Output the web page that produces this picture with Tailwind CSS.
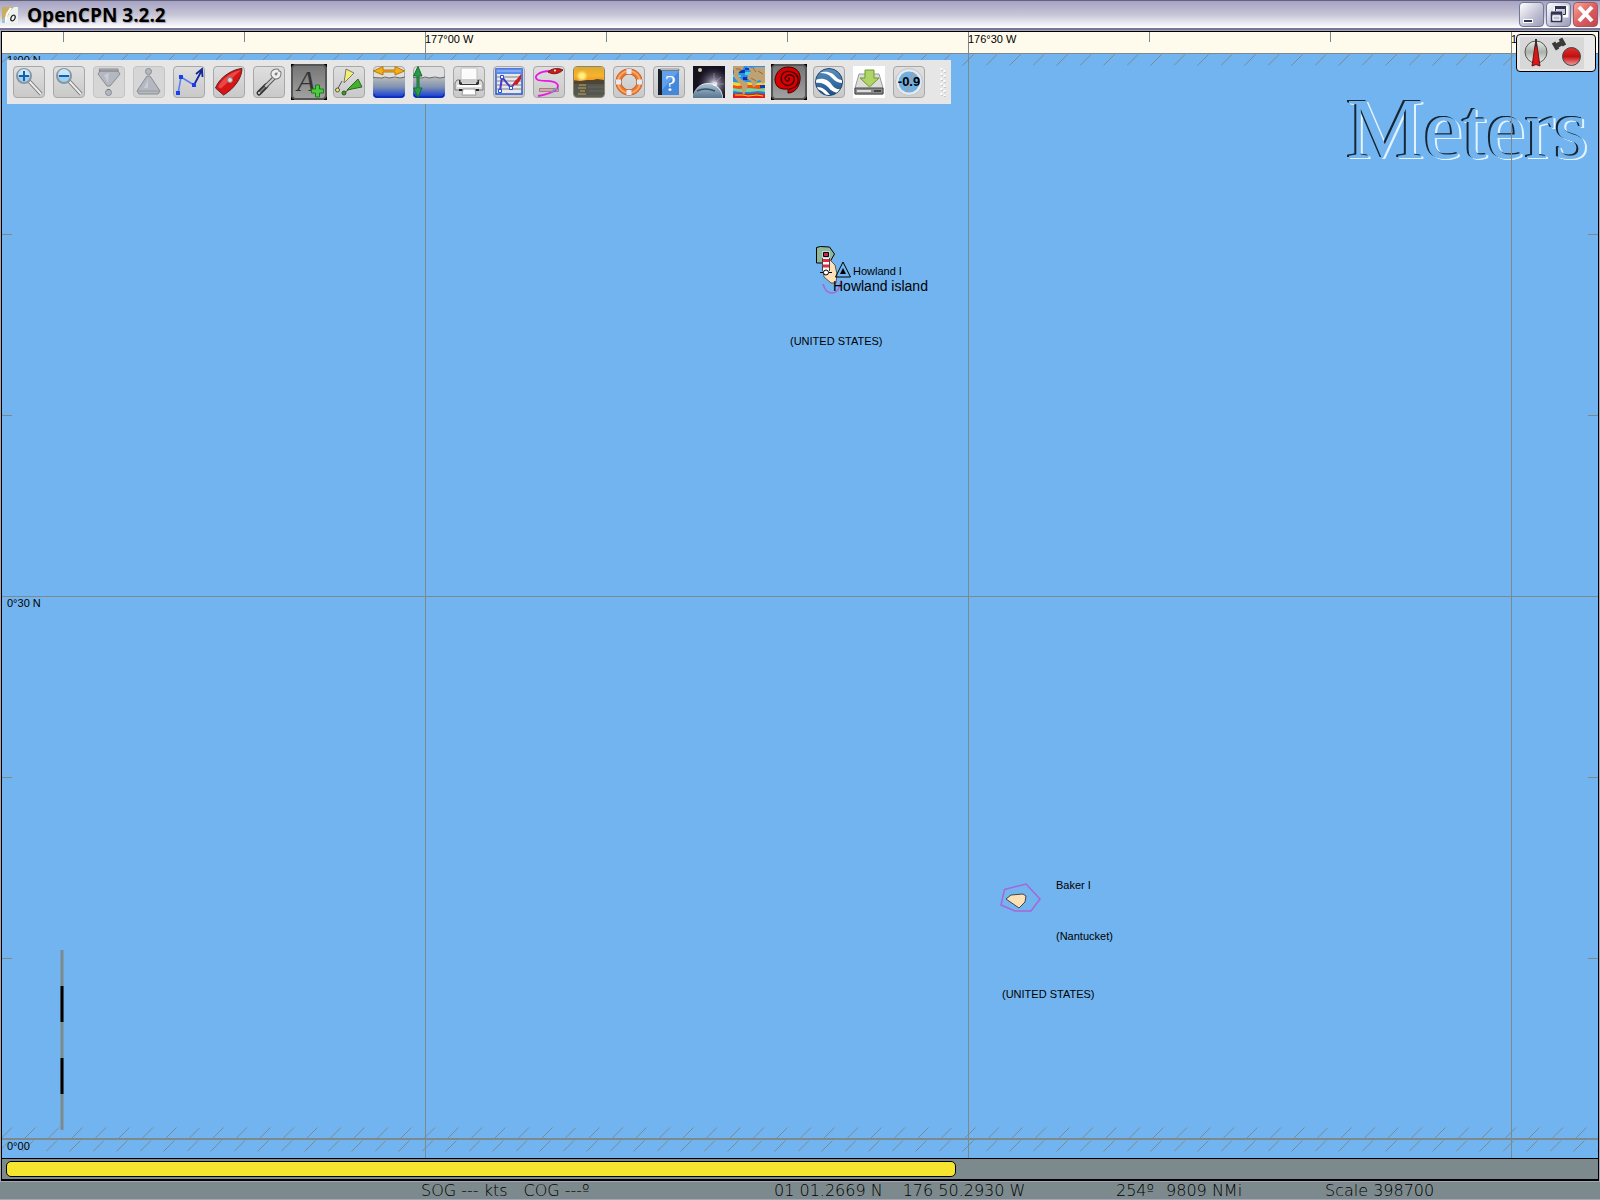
<!DOCTYPE html>
<html lang="en">
<head>
    <meta charset="UTF-8">
    <meta name="viewport" content="width=device-width, initial-scale=1">
    <title>OpenCPN 3.2.2</title>
    <script src="https://cdn.jsdelivr.net/npm/@tailwindcss/browser@4"></script>
</head>
<body class="min-h-screen flex flex-col overflow-hidden bg-[#a5a5b8] font-['Liberation_Sans',Arial,sans-serif] text-black">

    <!-- Title bar -->
    <header class="h-[30px] shrink-0 flex items-center pl-[2px] pr-[2px] border-t border-b-2 border-t-[#62627a] border-b-[#77779a] bg-linear-to-b from-[#a5a3c3] via-[#c6c5d6] to-white">
        <svg class="size-4" viewBox="0 0 16 16" aria-hidden="true">
            <rect width="16" height="16" fill="#eef3f0"/>
            <path d="M0 0h12L8 4 6 9 3 12 0 14z" fill="#c9ae62"/>
            <path d="M9 1 5 7 3 16" stroke="#fff" stroke-width="2" fill="none"/>
            <path d="M0 13 3 10v6H0z" fill="#9cc5d8"/>
            <ellipse cx="11" cy="11" rx="2" ry="3" transform="rotate(25 11 11)" fill="none" stroke="#222" stroke-width="1.2"/>
        </svg>
        <h1 class="ml-[9px] text-[19px] leading-6 font-bold font-['Open_Sans','Noto_Sans',sans-serif] [text-shadow:1px_1px_1px_#a0a0ac]">OpenCPN 3.2.2</h1>
        <div class="ml-auto flex gap-[2px]">
            <button type="button" aria-label="Minimize" class="size-[25px] rounded border border-[#6f7897] bg-linear-to-br from-white via-[#c9c9da] to-[#9c9cb8]">
                <svg viewBox="0 0 23 23" class="size-full"><rect x="3.500" y="16.500" width="9" height="3" fill="#313550" stroke="#fff"/></svg>
            </button>
            <button type="button" aria-label="Restore" class="size-[25px] rounded border border-[#6f7897] bg-linear-to-br from-white via-[#c9c9da] to-[#9c9cb8]">
                <svg viewBox="0 0 23 23" class="size-full" fill="none">
                    <path d="M8 4h12v9h-4M8 4v4" stroke="#fff" stroke-width="3"/>
                    <path d="M8.500 8V4.500h10v7H16" stroke="#313550"/><path d="M8 4.500h11" stroke="#313550" stroke-width="3"/>
                    <path d="M4.500 10.500h10v8h-10z" fill="#c2c2d8" stroke="#313550" stroke-width="1.500"/><path d="M4 10h11" stroke="#313550" stroke-width="3"/>
                    <path d="M6 13h7v4H6z" stroke="#fff"/>
                </svg>
            </button>
            <button type="button" aria-label="Close" class="size-[25px] rounded border border-[#a85563] bg-linear-to-br from-[#f4a99c] via-[#dc5f60] to-[#c04450]">
                <svg viewBox="0 0 23 23" class="size-full"><path d="M5 4 18 18M18 4 5 18" stroke="#fff" stroke-width="4"/></svg>
            </button>
        </div>
    </header>

    <!-- Chart window -->
    <div class="flex-1 flex flex-col mx-px mt-px border border-b-2 border-black">
        <main class="relative flex-1 overflow-hidden bg-[#72b4ef] text-[11px] leading-3">
            <div class="h-[22px] bg-[#fffbec] border-b border-[#7d8a8d]"></div>

            <div class="absolute right-[10px] top-[49px] text-[87px] leading-[96px] font-['Liberation_Serif','Times_New_Roman',serif] text-[#72b4ef] [text-shadow:-1px_-1px_0_#172635,-2px_-1px_0_#172635,1px_1px_0_#e2f2ff,2px_1px_0_#e2f2ff]">Meters</div>

            <!-- Graticule and chart objects -->
            <svg class="absolute inset-0 size-full" aria-hidden="true">
                <defs>
                    <pattern id="hatchDown" x="0" y="0" width="47" height="12" patternUnits="userSpaceOnUse">
                        <path d="M0 11.500 11 .5M23.500 11.500l11-11" stroke="#7d8a8d"/>
                    </pattern>
                </defs>
                <g transform="translate(-2 -32)" fill="none">
                    <g transform="translate(-1 54)"><rect width="4000" height="12" fill="url(#hatchDown)"/></g>
                    <g transform="translate(1 1127)"><rect width="4000" height="12" fill="url(#hatchDown)"/></g>
                    <g transform="translate(-1 1140)"><rect width="4000" height="12" fill="url(#hatchDown)"/></g>

                    <g stroke="#7d8a8d" shape-rendering="crispEdges">
                        <path d="M425.500 32V1300M968.500 32V1300M1511.500 32V1300M0 596.500H4000"/>
                        <path d="M0 1139H4000" stroke-width="2"/>
                        <path d="M63.500 32v10M244.500 32v10M606.500 32v10M787.500 32v10M1149.500 32v10M1330.500 32v10"/>
                        <path d="M2 234.500h10M2 415.500h10M2 777.500h10M2 958.500h10M1588 234.500h10M1588 415.500h10M1588 777.500h10M1588 958.500h10"/>
                    </g>
                    <path d="M62 950V1130" stroke="#7d8a8d" stroke-width="3"/>
                    <path d="M62 986v36M62 1058v36" stroke="#000" stroke-width="3"/>

                    <!-- Howland -->
                    <path d="M823 284c2 6 4 9 9 9s8-5 9-13" stroke="#a866d4" stroke-width="1.500"/>
                    <path d="M816.500 247.500l4-1 9 .5 5 7-4 7-5 2h-9z" fill="#8cb89c" stroke="#000"/>
                    <path d="M830 260l5 5 2 9-1 9h-5l-7-6-1-8z" fill="#fce0b8" stroke="#555"/>
                    <path d="M822 251h8v20h-8z" fill="#c5d4dc"/>
                    <path d="M823.500 252.500h5v4h-5z" fill="#c22b45" stroke="#000"/>
                    <path d="M823 258h6v13h-6z" fill="#fff"/><path d="M823 260.500h6M823 266h6" stroke="#e8283c" stroke-width="3"/>
                    <path d="M822.500 258v13M829.500 258v13" stroke="#444"/>
                    <circle cx="826" cy="272.500" r="2.500" fill="#fff" stroke="#000"/><path d="M820 272.500h3M829 272.500h3" stroke="#000"/>
                    <path d="M843 262l7.500 15h-15z" stroke="#000"/><path d="M843 268l3 6h-6z" fill="#000"/>
                    <!-- Baker -->
                    <path d="M1004.500 889.500l21.500-5.500 14 15-9 12h-16l-14-6z" stroke="#a866d4" stroke-width="1.500"/>
                    <path d="M1006 899l5-4 12-1 3 2-1 6-6 6z" fill="#fce0b8" stroke="#444"/>
                </g>
            </svg>

            <span class="absolute left-[423px] top-px">177°00 W</span>
            <span class="absolute left-[966px] top-px">176°30 W</span>
            <span class="absolute left-[1509px] top-px whitespace-nowrap">176°00 W</span>
            <span class="absolute left-[5px] top-[22px]">1°00 N</span>
            <span class="absolute left-[5px] top-[565px]">0°30 N</span>
            <span class="absolute left-[5px] top-[1108px]">0°00</span>

            <span class="absolute left-[851px] top-[233px]">Howland I</span>
            <span class="absolute left-[831px] top-[246px] text-sm leading-4">Howland island</span>
            <span class="absolute left-[788px] top-[303px]">(UNITED STATES)</span>
            <span class="absolute left-[1054px] top-[847px]">Baker I</span>
            <span class="absolute left-[1054px] top-[898px]">(Nantucket)</span>
            <span class="absolute left-[1000px] top-[956px]">(UNITED STATES)</span>

            <!-- Toolbar -->
            <div role="toolbar" aria-label="Chart tools" class="absolute left-[5px] top-7 h-11 flex items-center gap-2 pl-[6px] pr-1 bg-[#e6e6e6]">
                <button type="button" aria-label="Zoom in" class="size-8 rounded border border-[#a8a8a8] bg-linear-to-b from-[#dfdfdf] to-[#c9c9c9]">
                    <svg viewBox="1 1 30 30" class="size-full" fill="none">
                        <path d="M16 15 28 28" stroke="#777" stroke-width="4"/><path d="M16 15 28 28" stroke="#eee" stroke-width="2"/>
                        <circle cx="11" cy="10" r="7" fill="#9ad2f5" stroke="#8a959c" stroke-width="2"/><path d="M5 9a6 6 0 0 1 12 0z" fill="#c4e7fb"/>
                        <path d="M6 10h10M11 5v10" stroke="#1c5fa8" stroke-width="2"/>
                    </svg>
                </button>
                <button type="button" aria-label="Zoom out" class="size-8 rounded border border-[#a8a8a8] bg-linear-to-b from-[#dfdfdf] to-[#c9c9c9]">
                    <svg viewBox="1 1 30 30" class="size-full" fill="none">
                        <path d="M16 15 28 28" stroke="#777" stroke-width="4"/><path d="M16 15 28 28" stroke="#eee" stroke-width="2"/>
                        <circle cx="11" cy="10" r="7" fill="#9ad2f5" stroke="#8a959c" stroke-width="2"/><path d="M5 9a6 6 0 0 1 12 0z" fill="#c4e7fb"/>
                        <path d="M6 10h10" stroke="#1c5fa8" stroke-width="2"/>
                    </svg>
                </button>
                <button type="button" aria-label="Larger scale chart" class="size-8 rounded border border-[#c4c4c4] bg-[#d6d6d6]">
                    <svg viewBox="1 1 30 30" class="size-full" fill="#b4b8c0" stroke="#888c92">
                        <path d="M6 3h19v2l2 3-10 12h-3L5 8l2-3z"/><path d="M6 5h19" stroke="#777"/><path d="M16 7 11 9l4 8z" fill="#c8ccd4" stroke="none"/><circle cx="15.500" cy="26.500" r="3"/><path d="M14 23.500h3" stroke="#777"/>
                    </svg>
                </button>
                <button type="button" aria-label="Smaller scale chart" class="size-8 rounded border border-[#c4c4c4] bg-[#d6d6d6]">
                    <svg viewBox="1 1 30 30" class="size-full" fill="#b4b8c0" stroke="#888c92">
                        <circle cx="15.500" cy="5.500" r="3"/><path d="M14 10h3l8 12 2 3-2 3H6l-2-3 2-3z"/><path d="M5 25h21" stroke="#999"/><path d="M15 13 11 22h4z" fill="#c8ccd4" stroke="none"/>
                    </svg>
                </button>
                <button type="button" aria-label="Create route" class="size-8 rounded border border-[#a8a8a8] bg-linear-to-b from-[#dfdfdf] to-[#c9c9c9]">
                    <svg viewBox="1 1 30 30" class="size-full" fill="none">
                        <path d="M5 28 8 11l13 8" stroke="#5a7bf0" stroke-width="1.500"/><path d="M21 19 29 4M23 8l6-5 .5 8" stroke="#14289a" stroke-width="1.800"/>
                        <path d="M3 25h4v4H3zM6 9h4v4H6zM19 17h4v4h-4z" fill="#1740f0"/>
                    </svg>
                </button>
                <button type="button" aria-label="Follow ship" class="size-8 rounded border border-[#a8a8a8] bg-linear-to-b from-[#dfdfdf] to-[#c9c9c9]">
                    <svg viewBox="1 1 30 30" class="size-full">
                        <path d="M29 2.500C21 3 7 10 2.500 22l8 7C21 23 29 12 29 2.500z" fill="#d81414" stroke="#5c2020"/><path d="M28 4C20 5 9 12 5 21l3 1.500z" fill="#e84848"/><circle cx="17" cy="14" r="2.500" fill="#ddd" stroke="#888"/>
                    </svg>
                </button>
                <button type="button" aria-label="Settings" class="size-8 rounded border border-[#a8a8a8] bg-linear-to-b from-[#dfdfdf] to-[#c9c9c9]">
                    <svg viewBox="1 1 30 30" class="size-full" fill="none" stroke-linecap="round">
                        <path d="M6 27 13 20" stroke="#333" stroke-width="5"/><path d="M6 27 13 20" stroke="#888" stroke-width="1.500"/>
                        <path d="M13 20 22 11" stroke="#555" stroke-width="4"/><path d="M13 20 22 11" stroke="#ccc" stroke-width="2"/>
                        <path d="M24 5c-4 0-5 3-3 5 2 2 5 1 5-3" stroke="#777" stroke-width="5"/><path d="M24 5c-4 0-5 3-3 5 2 2 5 1 5-3" stroke="#f0f0f0" stroke-width="3"/><circle cx="6" cy="27" r="1" fill="#ddd"/>
                    </svg>
                </button>
                <button type="button" aria-label="Show ENC text" aria-pressed="true" class="size-9 -mx-[2px] bg-black">
                    <svg viewBox="0 0 36 36" class="size-full">
                        <defs><linearGradient id="pressed" x2="0" y2="1"><stop stop-color="#757575"/><stop offset="1" stop-color="#a2a2a2"/></linearGradient></defs>
                        <path d="M4 0h28l4 4v28l-4 4H4l-4-4V4z" fill="#8a8a8a"/><rect x="1" y="1" width="34" height="34" rx="4" fill="url(#pressed)" stroke="#555" stroke-width="2"/>
                        <text x="6" y="27" font-family="Liberation Serif, serif" font-style="italic" font-size="30" fill="#333">A</text>
                        <path d="M24.500 21h4v4h4v4h-4v4h-4v-4h-4v-4h4z" fill="#4ecb3a" stroke="#14801a"/>
                    </svg>
                </button>
                <button type="button" aria-label="Show AIS targets" class="size-8 rounded border border-[#a8a8a8] bg-linear-to-b from-[#dfdfdf] to-[#c9c9c9]">
                    <svg viewBox="1 1 30 30" class="size-full">
                        <path d="M4 24 9 15" stroke="#555"/><path d="M13 3l8 4-10 10z" fill="#f4ee70" stroke="#777"/><circle cx="4.500" cy="24" r="2" fill="#f0e860" stroke="#555"/>
                        <path d="M11 27 19 21" stroke="#444"/><path d="M25 13l4 8-15 3z" fill="#44b030" stroke="#2c6a22"/><circle cx="11" cy="27" r="2" fill="#3a9a2a" stroke="#245a1c"/>
                    </svg>
                </button>
                <button type="button" aria-label="Show currents" class="size-8 rounded border border-[#a8a8a8] bg-[#dfdfdf]">
                    <svg viewBox="0 0 32 32" class="size-8 -m-px">
                        <defs><linearGradient id="sea" x2="0" y2="1"><stop stop-color="#b4b8ba"/><stop offset=".45" stop-color="#7f92b0"/><stop offset="1" stop-color="#0834dc"/></linearGradient></defs>
                        <path d="M0 12h32v16q0 4-4 4H4q-4 0-4-4z" fill="url(#sea)"/><path d="M1 28q0 3 3 3h24q3 0 3-3" fill="none" stroke="#0a20a8"/>
                        <path d="M0 11.500l9 .5 3-1 4 1 6-1 5 1 5-1" fill="none" stroke="#666"/>
                        <path d="M.5 5 10 .5V4h12V.5L31.500 5 22 9V6H10v3z" fill="#f6ae18" stroke="#b87a08"/>
                    </svg>
                </button>
                <button type="button" aria-label="Show tides" class="size-8 rounded border border-[#a8a8a8] bg-[#dfdfdf]">
                    <svg viewBox="0 0 32 32" class="size-8 -m-px">
                        <path d="M0 12h32v16q0 4-4 4H4q-4 0-4-4z" fill="url(#sea)"/><path d="M1 28q0 3 3 3h24q3 0 3-3" fill="none" stroke="#0a20a8"/>
                        <path d="M0 11.500l9 .5 3-1 4 1 6-1 5 1 5-1" fill="none" stroke="#666"/>
                        <path d="M5 .5 9 10H6v12h3L5 31.500 .5 22H4V10H.5z" fill="#2a9a48" stroke="#157030"/>
                    </svg>
                </button>
                <button type="button" aria-label="Print chart" class="size-8 rounded border border-[#a8a8a8] bg-linear-to-b from-[#dfdfdf] to-[#c9c9c9]">
                    <svg viewBox="1 1 30 30" class="size-full">
                        <path d="M4 14h24l2 3v7H2v-7z" fill="#dcdcdc" stroke="#777"/><path d="M6 14h3v4h14v-4h3v4l-3 2H9l-3-2z" fill="#333"/><path d="M8 2h16v14H8z" fill="#fbfbfb" stroke="#c0c0c0"/><path d="M8 13h16v3H8z" fill="#ccc"/>
                        <path d="M4 20h24" stroke="#fff" stroke-width="2"/><path d="M6 23h20v2H6z" fill="#222"/><path d="M10 23h12l1 6H9z" fill="#fff" stroke="#999"/>
                    </svg>
                </button>
                <button type="button" aria-label="Route manager" class="size-8 rounded border border-[#a8a8a8] bg-linear-to-b from-[#dfdfdf] to-[#c9c9c9]">
                    <svg viewBox="1 1 30 30" class="size-full" fill="none">
                        <path d="M3 3h26v25H3z" fill="#e8e8e8" stroke="#2858d0" stroke-width="1.500"/><path d="M3 3h26v5H3z" fill="#5a8cec"/><path d="M4 5h24" stroke="#a8c4f8"/>
                        <path d="M4 11h24M4 15h24M4 19h24M4 23h24" stroke="#b4b4b4" stroke-width="2"/>
                        <path d="M7 25 9 11l9 11" stroke="#4838d0" stroke-width="2"/><path d="M18 22 24 14" stroke="#a02080" stroke-width="2"/><path d="M28 8v5l-4 6-4-1z" fill="#c82020"/>
                        <path d="M5.500 23.500h3v3h-3zM7.500 9.500h3v3h-3zM16.500 20.500h3v3h-3z" fill="#fff" stroke="#2050e0"/>
                    </svg>
                </button>
                <button type="button" aria-label="Start tracking" class="size-8 rounded border border-[#a8a8a8] bg-linear-to-b from-[#dfdfdf] to-[#c9c9c9]">
                    <svg viewBox="1 1 30 30" class="size-full" fill="none">
                        <path d="M6.500 22.500h19v3h-19z" fill="#d6a8a4" stroke="#a08080"/><path d="M17 5C6 5-1 11 5 14c5 2 19-1 20 6 0 5-9 8-20 10" stroke="#e818e0" stroke-width="1.800"/>
                        <path d="M30 4C24 1 18 3 15 6c5 3 11 2 15-2z" fill="#d01818" stroke="#702020"/><circle cx="22" cy="4.500" r="1" fill="#fff"/><path d="m18 26 6-4" stroke="#7aa0c0" stroke-width="2"/>
                    </svg>
                </button>
                <button type="button" aria-label="Change color scheme" class="size-8 rounded overflow-hidden border border-[#8c8468]">
                    <svg viewBox="1 1 30 30" class="size-full">
                        <defs>
                            <linearGradient id="dusk" x2="0" y2="1"><stop stop-color="#d8a838"/><stop offset=".6" stop-color="#f8b428"/><stop offset="1" stop-color="#e89030"/></linearGradient>
                            <radialGradient id="sun"><stop offset=".4" stop-color="#ffee80"/><stop offset="1" stop-color="#ffe060" stop-opacity="0"/></radialGradient>
                        </defs>
                        <path d="M0 0h32v16H0z" fill="url(#dusk)"/><circle cx="9" cy="10" r="6" fill="url(#sun)"/>
                        <path d="M0 14l7 1 7-1 6 0 4-1 8 1v5H0z" fill="#504434"/><path d="M0 18h32v14H0z" fill="#545650"/><path d="M6 19h7M5 22h8M7 25h5M5 28h8" stroke="#a08c50" stroke-width="1.500"/><path d="M15 21h16M16 25h15M3 30h27" stroke="#64665e"/>
                    </svg>
                </button>
                <button type="button" aria-label="Drop MOB marker" class="size-8 rounded border border-[#a8a8a8] bg-linear-to-b from-[#dfdfdf] to-[#c9c9c9]">
                    <svg viewBox="1 1 30 30" class="size-full" fill="none">
                        <circle cx="16" cy="16" r="10.500" stroke="#a8562c" stroke-width="6"/><circle cx="16" cy="16" r="10.500" stroke="#ee7828" stroke-width="5"/><circle cx="16" cy="16" r="11" stroke="#fcae74" stroke-width="1.500"/>
                        <path d="M16 3v5M16 24v5M3 16h5M24 16h5" stroke="#dfeafa" stroke-width="5"/>
                    </svg>
                </button>
                <button type="button" aria-label="Help" class="size-8 rounded border border-[#a8a8a8] bg-linear-to-b from-[#dfdfdf] to-[#c9c9c9]">
                    <svg viewBox="1 1 30 30" class="size-full">
                        <path d="M5 3h21v26H5z" fill="#4488dc"/><path d="M5 3h4v26H5z" fill="#18202c"/><path d="M7 3h19v1.500H8z" fill="#ddd" stroke="#444" stroke-width=".5"/><path d="M9 5h17L9 24z" fill="#62a0ea"/>
                        <text x="12" y="25" font-family="Liberation Serif, serif" font-size="24" fill="#fff">?</text>
                    </svg>
                </button>
                <button type="button" aria-label="Celestial navigation" class="size-8">
                    <svg viewBox="0 0 32 32" class="size-full">
                        <defs>
                            <radialGradient id="glow"><stop stop-color="#fff"/><stop offset=".3" stop-color="#b0a8c0" stop-opacity=".7"/><stop offset="1" stop-color="#443c58" stop-opacity="0"/></radialGradient>
                            <linearGradient id="planet" x2="0" y2="1"><stop stop-color="#a8c0d0"/><stop offset=".5" stop-color="#54708c"/><stop offset="1" stop-color="#182434"/></linearGradient>
                        </defs>
                        <path d="M0 0h32v32H0z" fill="#15111f"/><circle cx="21" cy="18" r="17" fill="url(#glow)"/><circle cx="7" cy="4" r="2" fill="#d8ccb0"/>
                        <circle cx="15" cy="32" r="15" fill="#e0ecf4"/><circle cx="14.500" cy="33" r="15" fill="url(#planet)"/><path d="M4 25q8-4 18 0" stroke="#34506a" stroke-width="1.500" fill="none"/>
                        <circle cx="22" cy="18" r="2" fill="#fff"/><path d="M21 7v11M21 18h10M28 11l-7 7" stroke="#b5b0c4" stroke-width=".5"/>
                    </svg>
                </button>
                <button type="button" aria-label="Climatology" class="size-8">
                    <svg viewBox="0 0 32 32" class="size-full">
                        <path d="M0 0h32v32H0z" fill="#2890e8"/><path d="M0 4h12v3H0zM10 11h18v3H10z" fill="#1030a8"/><path d="M0 9h8v2H0zM12 6h10v3H12z" fill="#40d8e0"/>
                        <path d="M0 16l8 1 6-1 9 1 9-1v4H0z" fill="#f0d830"/><path d="M0 19l4 1 8-1h20v4H0z" fill="#f05018"/><path d="M0 22l6 1 10-1 10 1 6-1v4H0z" fill="#70d8a0"/><path d="M0 25l8 1h9l8-1 7 1v3H0z" fill="#2080e0"/><path d="M0 28l6-1 9 1 9-1 8 1v4H0z" fill="#e01c18"/><path d="M2 29h8l5 1 9-1 6 1" stroke="#f8d820" fill="none"/>
                        <path d="M0 0h11l-1 3-4 3-1 4 4 4 6 3-1 5-3 7-2-3V20l-3-3-5-6zM14 0l4 2 5-1h9v15l-2 2-3-4-3 1-1 5-3 1-2-6-4-2 1-4 3-3z" fill="#c0a272"/>
                        <path d="M3 3h4l1 2M18 12l5 3M25 5l5 3M20 2l3 4" stroke="#8a7048" fill="none"/>
                        <path d="M12 2h4v2h-4zM27 19h5v3h-5z" fill="#1438c0"/>
                    </svg>
                </button>
                <button type="button" aria-label="Weather routing" aria-pressed="true" class="size-9 -mx-[2px] bg-black">
                    <svg viewBox="0 0 36 36" class="size-full">
                        <path d="M4 0h28l4 4v28l-4 4H4l-4-4V4z" fill="#8a8a8a"/><rect x="1" y="1" width="34" height="34" rx="4" fill="url(#pressed)" stroke="#555" stroke-width="2"/>
                        <path d="M17 3c9 0 13 6 12 13-1 8-6 13-12 13v-4C8 26 4 22 4 15 5 8 10 3 17 3z" fill="#d80000" stroke="#400"/>
                        <path d="M18 25c8-1 10-6 9-11-2-7-13-9-16-3-3 7 3 12 8 10s6-9 1-10-8 4-4 6c3 0 3-3 1-3" fill="none" stroke="#300" stroke-width="1.300"/>
                    </svg>
                </button>
                <button type="button" aria-label="Google Earth" class="size-8 rounded border border-[#a8a8a8] bg-linear-to-b from-[#dfdfdf] to-[#c9c9c9]">
                    <svg viewBox="1 1 30 30" class="size-full">
                        <defs>
                            <clipPath id="globe"><circle cx="16" cy="16" r="13"/></clipPath>
                            <linearGradient id="blue" x2="0" y2="1"><stop stop-color="#5a90c0"/><stop offset="1" stop-color="#1c5088"/></linearGradient>
                        </defs>
                        <circle cx="16" cy="16" r="13.500" fill="url(#blue)" stroke="#28486c"/>
                        <g clip-path="url(#globe)" fill="#fff"><path d="M6 7c8-3 14 0 17 4 3 3 5 3 7 3v3c-5 0-8-2-11-5C16 8 12 7 6 7z"/><path d="M2 14c8-3 14 0 17 5 3 4 6 5 10 4l-2 4c-5 0-9-2-12-6-3-3-7-5-13-4z"/><path d="M4 21c6 0 9 3 13 8h-4c-3-3-5-5-9-6z"/></g>
                    </svg>
                </button>
                <button type="button" aria-label="Chart downloader" class="size-8 bg-white">
                    <svg viewBox="0 0 32 32" class="size-full">
                        <path d="M6 8h20l4 14v6H2v-6z" fill="#dcdcdc" stroke="#999"/><path d="M2 22h28v6H2z" fill="#8a8a8a" stroke="#444"/><path d="M4 25h14" stroke="#ddd" stroke-width="2"/><path d="M21 25h7" stroke="#444" stroke-width="2"/>
                        <path d="M12 4h9v8h5l-9.500 9L7 12h5z" fill="#b0d468" stroke="#6a9a28"/>
                    </svg>
                </button>
                <button type="button" aria-label="Magnetic variation" class="size-8 rounded border border-[#a8a8a8] bg-linear-to-b from-[#dfdfdf] to-[#d0d0d0]">
                    <svg viewBox="1 1 30 30" class="size-full">
                        <circle cx="16" cy="16" r="13.500" fill="#e6e9ec" stroke="#c0c4c8"/><circle cx="16" cy="16" r="10.500" fill="#6cb0e4"/><path d="m20 6-6 20" stroke="#d09070"/>
                        <text x="16" y="20" text-anchor="middle" font-family="Liberation Sans, sans-serif" font-weight="bold" font-size="13">-0.9</text>
                    </svg>
                </button>
                <svg viewBox="0 0 14 32" class="h-8 w-[14px]" aria-hidden="true">
                    <path d="M9 3v28M12 5v26" stroke="#c8c8c8" stroke-width="2" stroke-dasharray="2 3"/><path d="M8.500 2v28M11.500 4v26" stroke="#fff" stroke-width="2" stroke-dasharray="2 3"/>
                </svg>
            </div>

            <!-- Compass and GPS status -->
            <div class="absolute right-[2px] top-[2px] w-20 h-[38px] pl-[3px] pt-[2px] rounded border border-black bg-[#e8e8e8]">
                <svg viewBox="0 0 64 32" class="w-16 h-8" aria-label="North up, no GPS fix">
                    <defs>
                        <linearGradient id="dial" x2="0" y2="1"><stop stop-color="#eee"/><stop offset=".5" stop-color="#a8b0a8"/><stop offset="1" stop-color="#f4f4f4"/></linearGradient>
                        <linearGradient id="ball" x2="0" y2="1"><stop stop-color="#e03030"/><stop offset=".5" stop-color="#c01010"/><stop offset="1" stop-color="#f4a0a0"/></linearGradient>
                    </defs>
                    <path d="M0 0h64v32H0z" fill="#d8d8d8"/>
                    <circle cx="16" cy="15" r="11" fill="url(#dial)" stroke="#555"/><path d="M16 2 20 29 16 27.500 12 29z" fill="#d81818" stroke="#611"/><path d="M16 2v8" stroke="#333" stroke-width="2"/>
                    <circle cx="51.500" cy="19.500" r="9" fill="url(#ball)" stroke="#444"/>
                    <g transform="rotate(-30 39 7)" fill="#3a3a3a"><path d="M33 3h4v8h-4zM41 3h4v8h-4zM37 5h4v5h-4z"/></g>
                </svg>
            </div>
        </main>

        <!-- Chart bar -->
        <div class="h-[21px] shrink-0 border-t border-black bg-[#7d8a8d] pl-1 py-[2px]">
            <button type="button" aria-label="Available chart" class="block h-4 w-[59.7%] rounded-[5px] border border-black bg-[#f5e52f]"></button>
        </div>
    </div>

    <!-- Status bar -->
    <footer class="mt-px mb-px h-[17px] shrink-0 grid grid-cols-[421fr_353fr_342fr_209fr_275fr] bg-[#7d8a8d] font-['DejaVu_Sans',Verdana,sans-serif] font-extralight text-base leading-[18px] whitespace-nowrap">
        <div class="col-start-2 flex gap-4"><span>SOG --- kts</span><span>COG ---º</span></div>
        <div class="flex gap-5"><span>01 01.2669 N</span><span>176 50.2930 W</span></div>
        <div class="flex gap-3"><span>254º</span><span>9809 NMi</span></div>
        <div>Scale 398700</div>
    </footer>
</body>
</html>
